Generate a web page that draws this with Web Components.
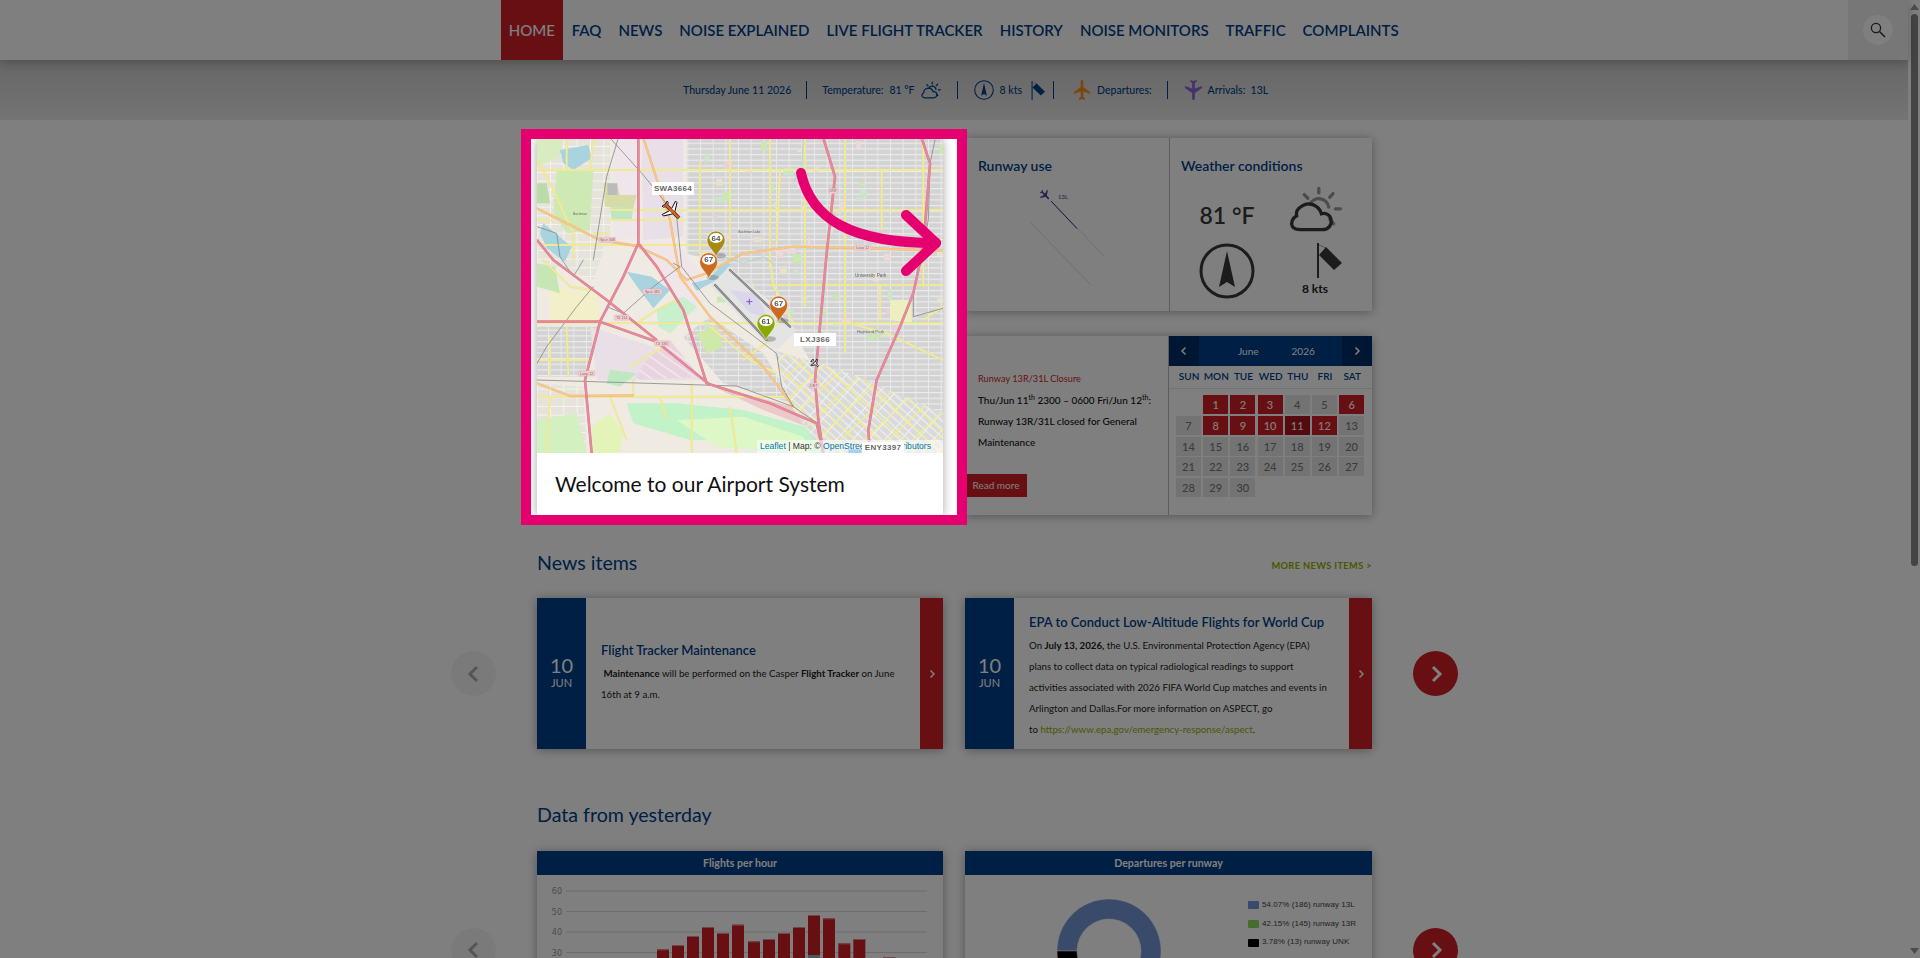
<!DOCTYPE html>
<html lang="en">
<head>
<meta charset="utf-8">
<title>Airport System</title>
<style>
  html, body { margin: 0; padding: 0; height: 958px; overflow: hidden; background: #fff; }
  body { font-family: Lato, "Liberation Sans", sans-serif; color: #333; }
  #page { position: relative; width: 1920px; height: 958px; overflow: hidden; background: #fff; }
  main { display: block; width: 1908px; }
</style>
</head>
<body>
<div id="page">
  <site-header></site-header>
  <status-bar></status-bar>
  <main>
    <top-grid>
      <welcome-map></welcome-map>
      <runway-card></runway-card>
      <notice-card></notice-card>
    </top-grid>
    <section-head title="News items" link="MORE NEWS ITEMS &gt;" top="32" bottom="21"></section-head>
    <card-row height="151">
      <news-card title="Flight Tracker Maintenance" pad="0 10px 3px 15px">
        <p>&nbsp;<b>Maintenance</b> will be performed on the Casper <b>Flight Tracker</b> on June<br>16th at 9 a.m.</p>
      </news-card>
      <news-card title="EPA to Conduct Low-Altitude Flights for World Cup" pad="5px 10px 0 15px">
        <p>On <b>July 13, 2026,</b> the U.S. Environmental Protection Agency (EPA)<br>plans to collect data on typical radiological readings to support<br>activities associated with 2026 FIFA World Cup matches and events in<br>Arlington and Dallas.For more information on ASPECT, go<br>to <a style="color:#8fb000;text-decoration:none">https://www.epa.gov/emergency-response/aspect</a>.</p>
      </news-card>
    </card-row>
    <section-head title="Data from yesterday" top="50" bottom="22"></section-head>
    <card-row height="198">
      <bars-card title="Flights per hour"></bars-card>
      <donut-card title="Departures per runway"></donut-card>
    </card-row>
  </main>
  <fake-scrollbar></fake-scrollbar>
  <tour-spot></tour-spot>
</div>

<script>
const NAVY = "#003f8a";
const RED = "#d01f27";
const PLANE = "M21 16v-2l-8-5V3.5c0-.83-.67-1.5-1.5-1.5S10 2.67 10 3.5V9l-8 5v2l8-2.5V19l-2 1.5V22l3.5-1 3.5 1v-1.5L13 19v-5.5l8 2.5z";
const CHEVRON_L = '<polyline points="15,5 8,12 15,19" fill="none" stroke="currentColor" stroke-width="3"/>';
const CHEVRON_R = '<polyline points="9,5 16,12 9,19" fill="none" stroke="currentColor" stroke-width="3"/>';

function cloudSvg(w, h, cloud, rays) {
  return `<svg width="${w}" height="${h}" viewBox="985 165 160 145" style="display:block">
    <g fill="none" stroke="${rays}" stroke-width="10" stroke-linecap="round">
      <path d="M1048 224A30 30 0 0 1 1105 232"/>
      <path d="M1075 175V189M1031 194L1042 205M1118 191L1108 202M1125 237H1140M1108 268L1120 282"/>
    </g>
    <path d="M1020 300H1085C1105 300 1115 285 1112 270C1110 255 1095 248 1083 252C1075 225 1045 215 1025 228C1012 235 1005 245 1008 258C995 265 990 280 995 290C1000 298 1010 300 1020 300Z" fill="none" stroke="${cloud}" stroke-width="10"/>
  </svg>`;
}
function compassSvg(size, color) {
  return `<svg width="${size}" height="${size}" viewBox="0 0 56 56" style="display:block">
    <circle cx="28" cy="28" r="26" fill="none" stroke="${color}" stroke-width="3"/>
    <polygon points="28,8 36,44 28,39 20,44" fill="${color}"/>
  </svg>`;
}
function sockSvg(w, h, color) {
  return `<svg width="${w}" height="${h}" viewBox="0 0 26 35" style="display:block">
    <rect x="1" y="0" width="2" height="35" fill="${color}"/>
    <path d="M3 2L10 5" stroke="#aaa" stroke-width="1"/>
    <polygon points="10,4 26,20 18,27 3,12" fill="${color}"/>
  </svg>`;
}

class SiteHeader extends HTMLElement {
  constructor() {
    super();
    this.attachShadow({ mode: "open" });
  }
  connectedCallback() {
    const items = ["FAQ", "NEWS", "NOISE EXPLAINED", "LIVE FLIGHT TRACKER", "HISTORY", "NOISE MONITORS", "TRAFFIC", "COMPLAINTS"];
    this.shadowRoot.innerHTML = `
      <style>
        :host { display: flex; height: 60px; width: 1908px; background: #fff; position: relative; z-index: 2;
                box-shadow: 0 2px 10px rgba(0,0,0,.25); padding-left: 500.5px; box-sizing: border-box; }
        a { display: flex; align-items: center; padding: 0 8.5px; color: ${NAVY}; font-size: 15px; font-weight: 600; white-space: nowrap; }
        a.on { background: ${RED}; color: #fff; padding: 0 8.3px; font-weight: 500; }
        .search { margin-left: auto; width: 60px; background: #eee; display: flex; align-items: center; justify-content: center; }
        .circle { width: 30px; height: 30px; border-radius: 50%; background: #fff; display: flex; align-items: center; justify-content: center; }
      </style>
      <a class="on">HOME</a>
      ${items.map((t) => `<a>${t}</a>`).join("")}
      <div class="search"><div class="circle">
        <svg width="16" height="16" viewBox="0 0 16 16"><circle cx="6" cy="6" r="4.6" fill="none" stroke="#333" stroke-width="1.3"/><path d="M9.5 9.5L15 15" stroke="#333" stroke-width="1.5"/></svg>
      </div></div>`;
  }
}
customElements.define("site-header", SiteHeader);

class StatusBar extends HTMLElement {
  constructor() {
    super();
    this.attachShadow({ mode: "open" });
  }
  connectedCallback() {
    this.shadowRoot.innerHTML = `
      <style>
        :host { display: flex; align-items: center; height: 60px; width: 1908px; box-sizing: border-box; padding-left: 683px;
                background: linear-gradient(#cdcdcd, #e8e8e8); color: ${NAVY}; font-size: 10.5px; font-weight: 500; white-space: nowrap; }
        i { display: block; width: 1px; height: 18px; background: ${NAVY}; }
        svg { flex: none; }
      </style>
      <span>Thursday June 11 2026</span>
      <i style="margin:0 15px"></i>
      <span>Temperature:</span>
      <span style="margin:0 6px">81 °F</span>
      ${cloudSvg(20, 18, NAVY, NAVY)}
      <i style="margin:0 15.5px 0 16.5px"></i>
      ${compassSvg(20, NAVY)}
      <span style="margin:0 9px 0 6px">8 kts</span>
      ${sockSvg(14, 19, NAVY)}
      <i style="margin:0 19px 0 8px"></i>
      <svg width="18" height="22" viewBox="1 1 21 22" preserveAspectRatio="none"><path d="${PLANE}" fill="#ff8a1c"/></svg>
      <span style="margin:0 15px 0 6px">Departures:</span>
      <i style="margin-right:16px"></i>
      <svg width="19" height="22" viewBox="1 1 21 22" preserveAspectRatio="none"><path d="${PLANE}" transform="rotate(180 11.5 12)" fill="#8f62d8"/></svg>
      <span style="margin-left:5px">Arrivals:&nbsp; 13L</span>`;
  }
}
customElements.define("status-bar", StatusBar);

class TopGrid extends HTMLElement {
  constructor() {
    super();
    this.attachShadow({ mode: "open" });
  }
  connectedCallback() {
    this.shadowRoot.innerHTML = `
      <style>
        :host { display: grid; grid-template-columns: 406px 407px; grid-template-rows: 173px 179px; column-gap: 22px; row-gap: 25px;
                margin: 18px 0 0 537px; width: 835px; }
        ::slotted(welcome-map) { grid-row: 1 / span 2; }
      </style>
      <slot></slot>`;
  }
}
customElements.define("top-grid", TopGrid);

class WelcomeMap extends HTMLElement {
  constructor() {
    super();
    this.attachShadow({ mode: "open" });
  }
  connectedCallback() {
    this.render();
  }
  road(points, color, width, casing) {
    const pts = points.join(" ");
    let out = "";
    if (casing) out += `<polyline points="${pts}" fill="none" stroke="${casing}" stroke-width="${width + 2}" stroke-linejoin="round"/>`;
    return out + `<polyline points="${pts}" fill="none" stroke="${color}" stroke-width="${width}" stroke-linejoin="round" stroke-linecap="round"/>`;
  }
  area(points, fill) {
    return `<polygon points="${points.join(" ")}" fill="${fill}"/>`;
  }
  pin(x, tip, color, value) {
    return `<ellipse cx="${x + 12}" cy="${tip - 3}" rx="18" ry="8" fill="#777" opacity=".45"/>
      <path d="M${x} ${tip}C${x - 8} ${tip - 20} ${x - 27} ${tip - 30} ${x - 27} ${tip - 50}A27 27 0 0 1 ${x + 27} ${tip - 50}C${x + 27} ${tip - 30} ${x + 8} ${tip - 20} ${x} ${tip}Z" fill="${color}" stroke="#fff" stroke-width="1.5"/>
      <ellipse cx="${x}" cy="${tip - 56}" rx="20" ry="15" fill="#fff"/>
      <text x="${x}" y="${tip - 48}" font-size="24" text-anchor="middle" font-family="Liberation Sans, sans-serif" font-weight="700" fill="#555">${value}</text>`;
  }
  shield(x, y, w, label) {
    return `<rect x="${x - w / 2}" y="${y - 8}" width="${w}" height="16" rx="2" fill="#f3ccd0" stroke="#e0a8ae"/>
      <text x="${x}" y="${y + 4}" font-size="11" text-anchor="middle" font-family="Liberation Sans, sans-serif" fill="#777">${label}</text>`;
  }
  render() {
    let svg = "";
    // land use
    svg += this.area([81,54, 1299,54, 1299,1000, 81,1000], "#efebe3");
    svg += this.area([81,54, 300,54, 300,340, 250,480, 81,420], "url(#lite)");
    svg += this.area([530,54, 1299,54, 1299,1000, 1040,780, 900,720, 800,560, 650,440, 530,400], "url(#dense)");
    svg += this.area([81,620, 270,620, 230,770, 81,770], "url(#dense)");
    svg += this.area([81,790, 220,800, 230,1000, 81,1000], "url(#lite)");
    svg += this.area([600,590, 760,700, 850,850, 640,790, 520,650], "url(#dense)");
    svg += this.area([240,620, 430,680, 580,780, 380,780, 260,780], "#e9dfe6");
    svg += this.area([310,54, 385,54, 385,350, 310,360], "#efe6ea");
    svg += this.area([395,54, 520,54, 520,350, 400,360], "#e8dfe8");
    svg += this.area([370,780, 570,770, 480,660, 410,720], "url(#pinkst)");
    svg += this.area([600,795, 850,860, 930,935, 760,870], "#ecc9c9");
    svg += this.area([120,500, 260,520, 270,600, 120,600], "#f2f0c8");
    svg += this.area([385,360, 500,370, 580,470, 560,590, 450,470], "#f0e6ea");
    // small patches scattered over the dense blocks
    let seed = 17;
    const rnd = (n) => { seed = (seed * 137 + 71) % 2039; return seed % n; };
    for (let i = 0; i < 70; i++) {
      const x = 560 + rnd(730), y = 60 + rnd(640), w = 8 + rnd(22), h = 6 + rnd(22);
      const c = ["#c8eab0", "#eed9d9", "#e6e2cc", "#c9e8c9", "#ebcfd6"][rnd(5)];
      svg += `<rect x="${x}" y="${y}" width="${w}" height="${h}" fill="${c}"/>`;
    }
    // parks and water
    svg += this.area([81,56, 160,56, 150,110, 81,140], "#d9ebc0");
    svg += this.area([140,150, 250,150, 240,330, 170,340, 130,280], "#cfe9b5");
    svg += this.area([81,190, 110,190, 120,250, 81,250], "#b9dca8");
    svg += this.area([81,430, 135,440, 150,520, 81,500], "#c6e6b4");
    svg += this.area([280,190, 320,190, 330,225, 380,225, 370,265, 285,260], "#d7dba8");
    svg += this.area([300,262, 370,262, 365,300, 305,300], "#bfe6c0");
    svg += this.area([440,570, 520,530, 560,560, 480,640, 445,620], "#c8f0cc");
    svg += this.area([560,640, 620,620, 640,680, 590,700], "#cfeaa8");
    svg += this.area([300,750, 380,760, 330,800, 290,790], "#bde8c0");
    svg += this.area([350,850, 500,850, 700,870, 900,925, 940,1000, 760,995, 620,960, 540,960, 370,910], "#c2f2c8");
    svg += this.area([500,900, 700,890, 880,950, 900,1000, 620,980], "#ddf7c6");
    svg += this.area([81,900, 200,880, 230,1000, 81,1000], "#d2f0c0");
    svg += this.area([245,920, 300,880, 340,940, 330,1000, 250,1000], "#e4f4b8");
    svg += this.area([292,190, 322,190, 322,225, 292,225], "#bbb");
    svg += this.area([150,90, 235,75, 245,115, 190,150, 160,130], "#a9d3df");
    svg += this.area([100,310, 185,380, 165,425, 110,385, 90,340], "#a9d3df");
    svg += this.area([350,455, 425,470, 480,510, 430,565, 385,505], "#a9d3df");
    svg += this.area([545,490, 595,478, 640,430, 665,428, 625,478, 560,512], "#a9d3df");
    svg += this.area([1030,870, 1060,880, 1045,905, 1022,890], "#a9cfa0");
    svg += this.area([1140,540, 1205,540, 1205,610, 1140,600], "#ecefc0");
    // airport
    svg += this.area([600,495, 660,440, 860,630, 800,690, 760,665], "#e4e4e4");
    svg += this.area([660,510, 740,520, 770,590, 720,580], "#dcd6ea");
    // SE diagonal blocks, yellow grid clipped to them
    svg += this.area([790,690, 1020,760, 1299,880, 1299,1000, 940,1000, 850,870], "url(#diag)");
    let grid = "";
    for (let i = -10; i < 20; i++) {
      grid += `<line x1="${700 + i * 72}" y1="640" x2="${1120 + i * 72}" y2="1040" stroke="#f3ee90" stroke-width="4"/>`;
      grid += `<line x1="${1400 + i * 72}" y1="640" x2="${980 + i * 72}" y2="1040" stroke="#f3ee90" stroke-width="4"/>`;
    }
    svg += `<g clip-path="url(#se)">${grid}</g>`;
    // yellow arterials
    const Y = "#f3ee96";
    const yellows = [
      [81,150, 1299,150], [300,270, 1299,270], [81,375, 600,375], [780,495, 1299,495], [81,610, 1299,610],
      [660,54, 660,430], [780,54, 780,440], [885,54, 885,560], [1005,54, 1005,700], [1115,150, 1115,330], [1240,54, 1240,500],
      [81,830, 850,830], [370,780, 370,830], [545,790, 545,1000], [660,860, 680,1000],
      [570,130, 570,400, 600,400], [1110,495, 1110,600],
      [81,120, 130,210, 190,340, 190,420], [100,420, 180,500, 250,510, 290,540],
      [170,620, 175,770], [81,720, 240,720], [300,300, 530,300], [780,420, 790,495, 850,610],
      [1299,720, 1130,640, 1020,610], [1299,560, 1240,600], [600,620, 720,720, 800,760],
      [360,740, 460,680], [700,720, 780,660], [380,610, 440,570, 500,540],
      [170,54, 170,150], [250,54, 240,150], [81,300, 130,300], [250,340, 300,340], [120,650, 120,770],
      [120,830, 110,1000], [300,830, 350,960], [450,830, 470,900], [800,370, 810,150]
    ];
    yellows.forEach((p) => { svg += this.road(p, Y, 4, "#e6df98"); });
    // orange trunk roads
    const O = "#f8c88a";
    [
      [81,265, 270,360, 380,378, 470,420, 530,480, 590,460, 700,400, 850,380, 1030,384, 1299,392],
      [400,54, 480,300, 510,470, 600,590, 760,740, 850,860],
      [81,790, 180,828, 370,826]
    ].forEach((p) => { svg += this.road(p, O, 5, "#eab478"); });
    // railways and thin dark lines
    [
      [300,54, 400,165, 500,290, 515,440, 600,550, 720,640, 800,700, 815,800, 850,860, 930,915],
      [81,780, 350,788, 680,798, 850,860],
      [1299,565, 1210,590, 1210,520, 1255,300, 1260,130, 1275,60],
      [250,500, 200,560, 110,680, 81,730],
      [290,560, 340,580, 430,500, 510,440],
      [325,54, 290,170, 250,420],
      [490,430, 510,440]
    ].forEach((p) => { svg += this.road(p, "#8a8a8a", 2.5); });
    svg += this.road([81,320, 140,340, 150,410, 190,470, 220,420], "#6a7a8a", 2);
    svg += this.road([640,410, 700,430, 760,410, 790,430], "#9fd3c0", 2);
    svg += this.road([880,56, 875,140, 850,190], "#9fd3c0", 2);
    // motorways
    const M = "#e58a9a";
    const C = "#d87c8c";
    [
      [385,54, 385,370, 340,470, 270,605, 225,780, 245,1000],
      [385,370, 440,440, 520,570, 590,790, 780,850, 920,910, 940,1000],
      [81,605, 270,605, 440,665, 600,795],
      [81,360, 130,420, 290,540, 340,580, 440,660],
      [940,54, 975,170, 950,400, 915,780, 925,900, 940,1000],
      [1235,54, 1260,130, 1240,380, 1210,520, 1170,620, 1100,780, 1075,930, 1080,1000]
    ].forEach((p) => { svg += this.road(p, M, 6, C); });
    // runways
    svg += this.road([660,450, 840,620], "#777", 7) + this.road([660,450, 840,620], "#bbb", 2);
    svg += this.road([615,495, 770,660], "#777", 7) + this.road([615,495, 770,660], "#bbb", 2);
    svg += `<path d="M718 536V554M709 545H727" stroke="#7a55c0" stroke-width="3"/>`;
    // labels
    const lbl = 'font-family="Liberation Sans, sans-serif" fill="#666"';
    svg += `<text x="1082" y="470" font-size="14" text-anchor="middle" ${lbl}>University Park</text>`;
    svg += `<text x="1082" y="640" font-size="13" text-anchor="middle" ${lbl}>Highland Park</text>`;
    svg += `<text x="718" y="338" font-size="10" text-anchor="middle" ${lbl}>Bachman Lake</text>`;
    svg += `<text x="210" y="285" font-size="10" text-anchor="middle" ${lbl}>Bachman</text>`;
    svg += this.shield(292, 360, 50, "Spur 348");
    svg += this.shield(427, 515, 58, "Spur 482");
    svg += this.shield(335, 593, 44, "TX 114");
    svg += this.shield(455, 670, 44, "TX 183");
    svg += this.shield(230, 760, 50, "Loop 12");
    svg += this.shield(1058, 383, 50, "Loop 12");
    svg += this.shield(970, 213, 28, "DNT");
    svg += this.shield(912, 797, 28, "DNT");
    // markers
    svg += this.pin(618, 410, "#a68a14", 64);
    svg += this.pin(596, 475, "#cc6a22", 67);
    svg += this.pin(806, 605, "#cc6a22", 67);
    svg += this.pin(768, 660, "#8aa800", 61);
    // planes
    svg += `<g transform="translate(485 272) rotate(135) scale(3) translate(-11.5 -12)">
      <path d="${PLANE}" fill="#fff" stroke="#000" stroke-width=".9"/>
      <rect x="10" y="2" width="3" height="19" fill="#d9601a" stroke="#222" stroke-width=".4"/>
    </g>`;
    svg += `<g transform="translate(915 730) rotate(135) scale(1.35) translate(-11.5 -12)">
      <path d="${PLANE}" fill="#fff" stroke="#000" stroke-width="1.6"/>
    </g>`;
    svg += `<rect x="1015" y="988" width="40" height="12" fill="#3a9ad9"/>`;

    this.shadowRoot.innerHTML = `
      <style>
        :host { display: block; position: relative; background: #fff; box-shadow: 0 1px 10px rgba(0,0,0,.35); }
        .map { position: relative; width: 406px; height: 315px; overflow: hidden; }
        svg { display: block; filter: blur(.45px); }
        .attr { position: absolute; right: 0; bottom: 0; padding: 0 12px 0 3px; background: rgba(255,255,255,.55);
                font: 8.6px/13px "Liberation Sans", sans-serif; color: #333; white-space: nowrap; }
        .attr a { color: #0078a8; }
        .tag { position: absolute; background: #fff; color: #666; font: 700 8px/13px "Liberation Sans", sans-serif; letter-spacing: .3px;
               height: 13px; width: 42px; text-align: center; white-space: nowrap; }
        h1 { margin: 0; padding: 0 0 0 18px; height: 62px; line-height: 62px; font-size: 21px; font-weight: 400; color: #111; }
      </style>
      <div class="map">
        <svg width="406" height="315" viewBox="81 54 1218 945" preserveAspectRatio="none">
          <defs>
            <pattern id="dense" width="38" height="17" patternUnits="userSpaceOnUse">
              <rect width="38" height="17" fill="#d3d3d3"/><rect width="38" height="3.5" fill="#ececec"/><rect width="2.5" height="17" fill="#ececec"/>
            </pattern>
            <pattern id="lite" width="40" height="26" patternUnits="userSpaceOnUse">
              <rect width="40" height="26" fill="#e6e3da"/><rect width="40" height="3" fill="#f3f3f0"/><rect width="3" height="26" fill="#f3f3f0"/>
            </pattern>
            <pattern id="diag" width="36" height="18" patternUnits="userSpaceOnUse" patternTransform="rotate(42)">
              <rect width="36" height="18" fill="#dadada"/><rect width="36" height="3.5" fill="#f0f0f0"/><rect width="3" height="18" fill="#f0f0f0"/>
            </pattern>
            <pattern id="pinkst" width="30" height="26" patternUnits="userSpaceOnUse" patternTransform="rotate(35)">
              <rect width="30" height="26" fill="#e9d3df"/><rect width="30" height="4" fill="#f4e9ef"/>
            </pattern>
            <clipPath id="se"><polygon points="790,690 1020,760 1299,880 1299,1000 940,1000 850,870"/></clipPath>
          </defs>
          ${svg}
        </svg>
        <div class="attr"><a>Leaflet</a> | Map: © <a>OpenStreetMap contributors</a></div>
        <span class="tag" style="left:115px;top:44px;">SWA3664</span>
        <span class="tag" style="left:257px;top:195px;">LXJ366</span>
        <span class="tag" style="left:325px;top:304px;height:11px;line-height:11px">ENY3397</span>
      </div>
      <h1>Welcome to our Airport System</h1>`;
  }
}
customElements.define("welcome-map", WelcomeMap);

class RunwayCard extends HTMLElement {
  constructor() {
    super();
    this.attachShadow({ mode: "open" });
  }
  connectedCallback() {
    this.shadowRoot.innerHTML = `
      <style>
        :host { display: flex; background: #fff; box-shadow: 0 1px 10px rgba(0,0,0,.35); color: #333; }
        .left { width: 204px; flex: none; border-right: 1px solid #bbb; box-sizing: content-box; margin-right: -1px; }
        .right { flex: 1; }
        h3 { margin: 0; height: 20px; line-height: 20px; padding-top: 18px; font-size: 14px; font-weight: 600; color: ${NAVY}; }
        .left h3 { padding-left: 13px; }
        .right h3 { padding-left: 12px; }
        .grid { display: grid; grid-template-columns: 92px 84px; grid-template-rows: 64px 70px; margin-left: 12px; }
        .temp { font-size: 23px; font-weight: 600; line-height: 30px; margin-top: 24px; text-align: center; color: #383838; white-space: nowrap; }
        .ic { margin: 9px 0 0 16px; }
        .cmp { margin: 3px 0 0 18px; }
        .sock { margin: 3px 0 0 0; display: flex; flex-direction: column; align-items: center; font-size: 12px; font-weight: 700; color: #222; }
        .sock svg { align-self: flex-start; margin-left: 43px; }
        .sock span { margin-top: 3px; line-height: 16px; }
        svg { display: block; }
      </style>
      <div class="left">
        <h3>Runway use</h3>
        <svg width="204" height="135" viewBox="965 176 204 135">
          <line x1="1031" y1="223" x2="1091" y2="285" stroke="#ddd"/>
          <line x1="1051" y1="201" x2="1104" y2="256" stroke="#ddd"/>
          <line x1="1051" y1="201" x2="1077" y2="228.6" stroke="#2a2a8c"/>
          <g transform="translate(1045 195) rotate(135) scale(.55) translate(-11.5 -12)"><path d="${PLANE}" fill="#5a3a9c"/></g>
          <text x="1058" y="199" font-size="6" fill="#5a3a9c" font-family="Lato, sans-serif">13L</text>
        </svg>
      </div>
      <div class="right">
        <h3>Weather conditions</h3>
        <div class="grid">
          <div class="temp">81 °F</div>
          <div class="ic">${cloudSvg(53, 48, "#383838", "#999")}</div>
          <div class="cmp">${compassSvg(56, "#383838")}</div>
          <div class="sock">${sockSvg(26, 35, "#383838")}<span>8 kts</span></div>
        </div>
      </div>`;
  }
}
customElements.define("runway-card", RunwayCard);

class NoticeCard extends HTMLElement {
  constructor() {
    super();
    this.attachShadow({ mode: "open" });
  }
  connectedCallback() {
    this.shadowRoot.innerHTML = `
      <style>
        :host { display: flex; background: #fff; box-shadow: 0 1px 10px rgba(0,0,0,.35); }
        .left { width: 204px; flex: none; box-sizing: border-box; border-right: 1px solid #bbb; padding-top: 36px; }
        h4 { margin: 0 0 3.5px; padding-left: 13px; font-size: 9.2px; line-height: 14px; font-weight: 400; color: ${RED}; }
        p { margin: 0; padding: 0 12px 0 13px; font-size: 10px; line-height: 21px; font-weight: 500; color: #111; }
        sup { font-size: 7px; line-height: 0; }
        a { display: block; width: 62px; height: 23px; margin-top: 21.5px; background: ${RED}; color: #fff; font-size: 10px; line-height: 23px; text-align: center; }
      </style>
      <div class="left">
        <h4>Runway 13R/31L Closure</h4>
        <p>Thu/Jun 11<sup>th</sup> 2300 – 0600 Fri/Jun 12<sup>th</sup>:<br>Runway 13R/31L closed for General<br>Maintenance</p>
        <a>Read more</a>
      </div>
      <air-calendar></air-calendar>`;
  }
}
customElements.define("notice-card", NoticeCard);

class AirCalendar extends HTMLElement {
  constructor() {
    super();
    this.attachShadow({ mode: "open" });
  }
  connectedCallback() {
    const red = [1, 2, 3, 6, 8, 9, 10, 12];
    let cells = "<span></span>"; // the 1st of June 2026 is a Monday
    for (let d = 1; d <= 30; d++) {
      const cls = d === 11 ? "today" : red.includes(d) ? "busy" : "";
      cells += `<b class="${cls}">${d}</b>`;
    }
    const names = ["SUN", "MON", "TUE", "WED", "THU", "FRI", "SAT"];
    this.shadowRoot.innerHTML = `
      <style>
        :host { display: block; width: 203px; }
        .head { display: flex; align-items: center; height: 30px; background: ${NAVY}; color: #fff; font-size: 10px; }
        .nav { width: 30px; height: 30px; background: #002e68; display: flex; align-items: center; justify-content: center; flex: none; }
        .nav svg { width: 12px; height: 12px; }
        .mid { flex: 1; display: flex; }
        .mid span:first-child { margin-left: 39px; }
        .mid span:last-child { margin-left: 33px; }
        .names { display: grid; grid-template-columns: repeat(7, 27.2px); height: 22px; line-height: 21px; padding-left: 6.5px; border-bottom: 1px solid #e4e4e4;
                 font-size: 10px; font-weight: 600; color: ${NAVY}; text-align: center; }
        .days { display: grid; grid-template-columns: repeat(7, 25px); grid-auto-rows: 19px; column-gap: 2.2px; row-gap: 1.75px; padding: 6px 0 0 7px; }
        b { background: #e6e6e6; color: #777; font-size: 11px; font-weight: 500; line-height: 19px; text-align: center; }
        b.busy { background: ${RED}; color: #fff; }
        b.today { background: #a8141c; color: #fff; }
      </style>
      <div class="head">
        <div class="nav"><svg viewBox="0 0 24 24">${CHEVRON_L}</svg></div>
        <div class="mid"><span>June</span><span>2026</span></div>
        <div class="nav"><svg viewBox="0 0 24 24">${CHEVRON_R}</svg></div>
      </div>
      <div class="names">${names.map((n) => `<span>${n}</span>`).join("")}</div>
      <div class="days">${cells}</div>`;
  }
}
customElements.define("air-calendar", AirCalendar);

class SectionHead extends HTMLElement {
  constructor() {
    super();
    this.attachShadow({ mode: "open" });
  }
  connectedCallback() {
    const link = this.getAttribute("link");
    this.shadowRoot.innerHTML = `
      <style>
        :host { display: flex; justify-content: space-between; align-items: center; width: 835px; height: 30px; margin-left: 537px;
                margin-top: ${this.getAttribute("top")}px; margin-bottom: ${this.getAttribute("bottom")}px; }
        h2 { margin: 0; font-size: 19.6px; font-weight: 400; color: ${NAVY}; }
        a { font-size: 9.3px; font-weight: 700; letter-spacing: .35px; color: #8fb000; margin-top: 6px; }
      </style>
      <h2>${this.getAttribute("title")}</h2>
      ${link ? `<a>${link}</a>` : ""}`;
  }
}
customElements.define("section-head", SectionHead);

class CardRow extends HTMLElement {
  constructor() {
    super();
    this.attachShadow({ mode: "open" });
  }
  connectedCallback() {
    this.shadowRoot.innerHTML = `
      <style>
        :host { display: flex; align-items: center; margin-left: 451px; height: ${this.getAttribute("height")}px; }
        .grid { display: grid; grid-template-columns: 406px 407px; grid-template-rows: 100%; column-gap: 22px; height: 100%; margin: 0 41px; }
        .btn { width: 45px; height: 45px; border-radius: 50%; flex: none; display: flex; align-items: center; justify-content: center; }
        .prev { background: #f5f5f5; color: #aaa; }
        .next { background: ${RED}; color: #fff; }
        svg { width: 24px; height: 24px; }
      </style>
      <div class="btn prev"><svg viewBox="0 0 24 24">${CHEVRON_L}</svg></div>
      <div class="grid"><slot></slot></div>
      <div class="btn next"><svg viewBox="0 0 24 24">${CHEVRON_R}</svg></div>`;
  }
}
customElements.define("card-row", CardRow);

class NewsCard extends HTMLElement {
  constructor() {
    super();
    this.attachShadow({ mode: "open" });
  }
  connectedCallback() {
    this.shadowRoot.innerHTML = `
      <style>
        :host { display: flex; background: #fff; box-shadow: 0 1px 10px rgba(0,0,0,.35); color: #222; }
        .date { width: 49px; flex: none; background: ${NAVY}; color: #fff; display: flex; flex-direction: column; align-items: center; justify-content: center; }
        .date b { font-size: 20px; font-weight: 400; line-height: 22px; }
        .date span { font-size: 11px; line-height: 13px; margin-bottom: 4px; }
        .body { flex: 1; min-width: 0; box-sizing: border-box; padding: ${this.getAttribute("pad")}; display: flex; flex-direction: column; justify-content: center; }
        h3 { margin: 0 0 3px; font-size: 13px; line-height: 20px; font-weight: 600; color: ${NAVY}; white-space: nowrap; }
        ::slotted(p) { margin: 0; font-size: 9.7px; line-height: 21px; white-space: nowrap; }
        .go { width: 23px; flex: none; background: ${RED}; color: #fff; display: flex; align-items: center; justify-content: center; }
        .go svg { width: 12px; height: 12px; }
      </style>
      <div class="date"><b>10</b><span>JUN</span></div>
      <div class="body"><h3>${this.getAttribute("title")}</h3><slot></slot></div>
      <div class="go"><svg viewBox="0 0 24 24">${CHEVRON_R}</svg></div>`;
  }
}
customElements.define("news-card", NewsCard);

class BarsCard extends HTMLElement {
  constructor() {
    super();
    this.attachShadow({ mode: "open" });
  }
  connectedCallback() {
    const tops = [[651,478],[696,465],[741,438],[786,411],[831,429],[876,404],[924,454],[969,447],[1014,429],[1059,411],[1104,375],[1149,385],[1195,460],[1240,447],[1330,501]];
    const Y = (z) => z / 3 + 790 - 875;
    const X = (z) => z / 3 + 440 - 537;
    let s = "";
    ["60", "50", "40", "30"].forEach((l, i) => {
      const y = 16 + i * 20.5;
      s += `<line x1="29" y1="${y}" x2="390" y2="${y}" stroke="#d8d8d8"/>`;
      s += `<text x="25" y="${y + 3}" font-size="8" text-anchor="end" fill="#999" font-family="DejaVu Sans, sans-serif">${l}</text>`;
    });
    tops.forEach(([x, t]) => {
      const top = Y(t);
      s += `<rect x="${X(x)}" y="${top}" width="12" height="${139 - top}" fill="${RED}"/>`;
      s += `<rect x="${X(x)}" y="${top}" width="12" height="1" fill="#e98a8e"/>`;
    });
    s += `<rect x="${X(1104)}" y="${Y(495)}" width="12" height="30" fill="#98b4be"/>`;
    this.shadowRoot.innerHTML = `
      <style>
        :host { display: block; background: #fff; box-shadow: 0 1px 10px rgba(0,0,0,.35); }
        h3 { margin: 0; height: 24px; line-height: 24px; background: ${NAVY}; color: #fff; font-size: 10.6px; font-weight: 700; text-align: center; }
        svg { display: block; }
      </style>
      <h3>${this.getAttribute("title")}</h3>
      <svg width="406" height="174" viewBox="0 0 406 174">${s}</svg>`;
  }
}
customElements.define("bars-card", BarsCard);

class DonutCard extends HTMLElement {
  constructor() {
    super();
    this.attachShadow({ mode: "open" });
  }
  arc(cx, cy, r0, r1, a0, a1, color) {
    const p = (r, a) => `${cx + r * Math.sin(a * Math.PI / 180)} ${cy - r * Math.cos(a * Math.PI / 180)}`;
    const large = a1 - a0 > 180 ? 1 : 0;
    return `<path d="M${p(r1, a0)}A${r1} ${r1} 0 ${large} 1 ${p(r1, a1)}L${p(r0, a1)}A${r0} ${r0} 0 ${large} 0 ${p(r0, a0)}Z" fill="${color}" stroke="#fff" stroke-width=".5"/>`;
  }
  connectedCallback() {
    const rows = [["#7494d4", "54.07% (186) runway 13L"], ["#90d860", "42.15% (145) runway 13R"], ["#000", "3.78% (13) runway UNK"]];
    const d = this.arc(144, 76, 32, 52, 270, 464.65, "#7494d4")
      + this.arc(144, 76, 32, 52, 104.65, 256.4, "#90d860")
      + this.arc(144, 76, 32, 52, 256.4, 270, "#000");
    this.shadowRoot.innerHTML = `
      <style>
        :host { display: block; position: relative; background: #fff; box-shadow: 0 1px 10px rgba(0,0,0,.35); }
        h3 { margin: 0; height: 24px; line-height: 24px; background: ${NAVY}; color: #fff; font-size: 10.6px; font-weight: 700; text-align: center; }
        .body { display: flex; }
        svg { display: block; flex: none; }
        ul { list-style: none; margin: 21px 0 0 -7px; padding: 0; font: 8px/18.7px "Liberation Sans", sans-serif; letter-spacing: .05px; color: #444; white-space: nowrap; }
        li { display: flex; align-items: center; }
        i { width: 11px; height: 8px; border-radius: 1px; margin-right: 3px; }
      </style>
      <h3>${this.getAttribute("title")}</h3>
      <div class="body">
        <svg width="290" height="174" viewBox="0 0 290 174">${d}</svg>
        <ul>${rows.map(([c, t]) => `<li><i style="background:${c}"></i>${t}</li>`).join("")}</ul>
      </div>`;
  }
}
customElements.define("donut-card", DonutCard);

class FakeScrollbar extends HTMLElement {
  constructor() {
    super();
    this.attachShadow({ mode: "open" });
  }
  connectedCallback() {
    this.shadowRoot.innerHTML = `
      <style>
        :host { position: absolute; right: 0; top: 0; bottom: 0; width: 12px; background: #fff; display: block; }
        .thumb { position: absolute; left: 3px; width: 7px; top: 14px; height: 552px; border-radius: 4px; background: #888; }
        svg { position: absolute; left: 2px; width: 9px; height: 6px; fill: #999; }
      </style>
      <svg style="top:4px" viewBox="0 0 9 6"><polygon points="4.5,0 9,6 0,6"/></svg>
      <div class="thumb"></div>
      <svg style="bottom:4px" viewBox="0 0 9 6"><polygon points="0,0 9,0 4.5,6"/></svg>`;
  }
}
customElements.define("fake-scrollbar", FakeScrollbar);

class TourSpot extends HTMLElement {
  constructor() {
    super();
    this.attachShadow({ mode: "open" });
  }
  connectedCallback() {
    // the big shadow is the dim layer, the hole leaves the map card lit
    this.shadowRoot.innerHTML = `
      <style>
        :host { position: absolute; left: 531px; top: 139px; width: 426px; height: 376px; display: block; z-index: 10;
                box-shadow: 0 0 0 10px #e6006f, 0 0 0 3000px rgba(0,0,0,.5); }
        svg { position: absolute; left: 0; top: 0; }
      </style>
      <svg width="426" height="376" viewBox="0 0 426 376">
        <g fill="none" stroke="#e6006f" stroke-width="10" stroke-linecap="round" stroke-linejoin="round">
          <path d="M270 34C280 80 320 104 405 104"/>
          <path d="M375 76L405 104L375 132"/>
        </g>
      </svg>`;
  }
}
customElements.define("tour-spot", TourSpot);
</script>
</body>
</html>
